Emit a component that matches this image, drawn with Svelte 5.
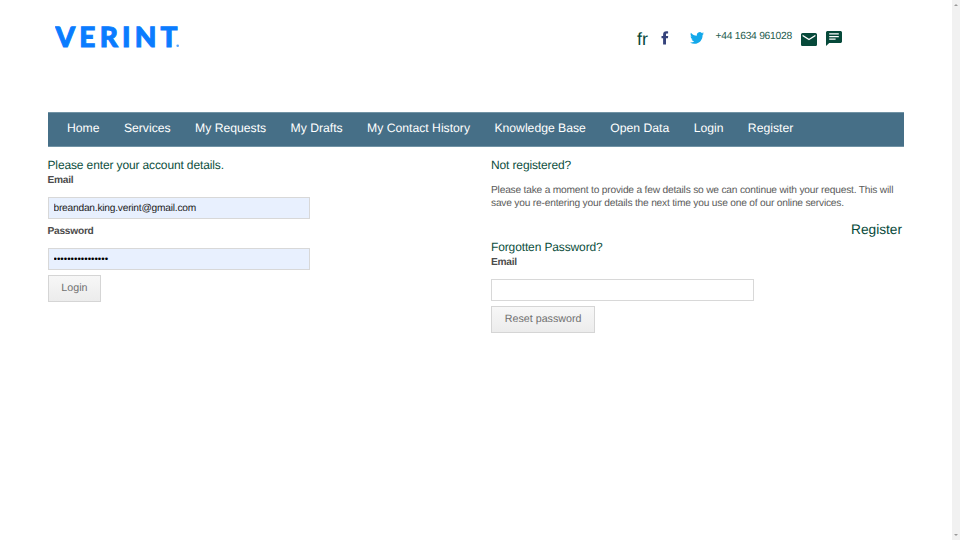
<script>
  const links = ['Home', 'Services', 'My Requests', 'My Drafts', 'My Contact History', 'Knowledge Base', 'Open Data', 'Login', 'Register'];
  let email = $state('breandan.king.verint@gmail.com');
  let password = $state('passwordpassword');
  let resetEmail = $state('');
</script>

<div class="page">
  <div class="content">
    <header>
      <svg class="logo" width="132" height="40" viewBox="0 -6 132 40" role="img" aria-label="Verint">
        <text x="0.5" y="23.7" textLength="122" lengthAdjust="spacing">VERINT</text>
        <circle cx="122.7" cy="22.8" r="1.3" />
      </svg>
      <div class="tools">
        <a class="lang" href="#fr">fr</a>
        <a class="fb" href="#facebook" aria-label="Facebook">
          <svg width="8" height="14" viewBox="0 0 8 14"><path fill="#35437c" d="M2.100 13.400V7.300H.5V4.900h1.600V3.400C2.100 1.200 3.400.3 5.300.3c.9 0 1.600.1 1.800.1v2.200H6C5.200 2.600 5 3 5 3.700v1.200h2.200l-.3 2.400H5v6.100z" /></svg>
        </a>
        <a class="tw" href="#twitter" aria-label="Twitter">
          <svg width="14" height="12" viewBox="0 2 24 20" preserveAspectRatio="none"><path fill="#13a8ea" d="M23.950 4.570a10 10 0 0 1-2.820.770 4.960 4.960 0 0 0 2.160-2.720c-.950.550-2 .950-3.130 1.180a4.920 4.920 0 0 0-8.380 4.480C7.690 8.100 4.070 6.130 1.640 3.160a4.820 4.820 0 0 0-.660 2.480c0 1.710.870 3.210 2.190 4.100a4.900 4.900 0 0 1-2.230-.620v.060a4.920 4.920 0 0 0 3.950 4.830 5 5 0 0 1-2.210.080 4.940 4.940 0 0 0 4.600 3.420A9.870 9.870 0 0 1 0 19.540a13.990 13.990 0 0 0 7.550 2.210c9.050 0 14-7.500 14-13.980 0-.210 0-.420-.020-.630a9.940 9.940 0 0 0 2.460-2.550z" /></svg>
        </a>
        <span class="phone">+44 1634 961028</span>
        <a class="mail" href="#mail" aria-label="Email us">
          <svg width="16" height="13" viewBox="2 4 20 16" preserveAspectRatio="none"><path fill="#06493a" d="M20 4H4c-1.100 0-2 .9-2 2v12c0 1.100.9 2 2 2h16c1.100 0 2-.9 2-2V6c0-1.100-.9-2-2-2zm0 4-8 5-8-5V6l8 5 8-5z" /></svg>
        </a>
        <a class="chat" href="#chat" aria-label="Chat">
          <svg width="16" height="15" viewBox="2 2 20 20" preserveAspectRatio="none"><path fill="#06493a" d="M20 2H4c-1.100 0-2 .9-2 2v18l4-4h14c1.100 0 2-.9 2-2V4c0-1.100-.9-2-2-2zM6 8.500h12v1.800H6zm8 5.300H6V12h8zm4-7H6V5h12z" /></svg>
        </a>
      </div>
    </header>
    <nav>
      {#each links as link}<a href="#{link}">{link}</a>{/each}
    </nav>
    <main>
      <form class="login">
        <h2>Please enter your account details.</h2>
        <label for="email">Email</label>
        <input id="email" class="filled" type="text" bind:value={email} />
        <label for="password">Password</label>
        <input id="password" class="filled secret" type="password" bind:value={password} />
        <button type="button">Login</button>
      </form>
      <section>
        <h2>Not registered?</h2>
        <p>Please take a moment to provide a few details so we can continue with your request. This will<br />save you re-entering your details the next time you use one of our online services.</p>
        <a class="register" href="#register">Register</a>
        <h2>Forgotten Password?</h2>
        <label for="reset">Email</label>
        <input id="reset" type="text" bind:value={resetEmail} />
        <button type="button">Reset password</button>
      </section>
    </main>
  </div>
  <div class="scrollbar"><i class="up"></i><i class="down"></i></div>
</div>

<style>
  .page {
    display: flex;
    justify-content: space-between;
    height: 540px;
    overflow: hidden;
    background: #fff;
    font-family: 'Liberation Sans', Arial, sans-serif;
    text-rendering: geometricPrecision;
    color: #5b5b5b;
  }
  .content { width: 856.500px; margin-left: 47.500px; }
  a { text-decoration: none; color: #06493a; }
  header { display: flex; height: 112.400px; box-sizing: border-box; padding: 23px 0 0 7px; }
  .logo { display: block; flex: none; margin-top: -6px; }
  .logo text { font: 900 28px Lato, sans-serif; fill: #0a7cff; stroke: #0a7cff; stroke-width: 1; }
  .logo circle { fill: #55a4ff; }
  .tools { display: flex; align-items: flex-start; margin-left: 450.500px; }
  .tools svg { display: block; }
  .lang { width: 24px; font-size: 17.800px; line-height: 20px; padding-top: 6px; }
  .fb { width: 28.500px; padding-top: 8px; }
  .tw { width: 26px; padding-top: 9px; }
  .phone { width: 85px; white-space: nowrap; font-size: 10.300px; letter-spacing: -.27px; line-height: 12px; padding-top: 8px; color: #245c4e; }
  .mail { width: 25px; padding-top: 10px; }
  .chat { padding-top: 8px; }
  nav {
    display: flex;
    gap: 24.400px;
    height: 34.600px;
    box-sizing: border-box;
    padding-left: 19.500px;
    background: #466f87;
    border: 1px solid #7193a5;
    border-width: 1px 0;
    line-height: 31px;
    font-size: 12.200px;
    white-space: nowrap;
  }
  nav a { color: #fff; }
  main { display: flex; padding-top: 11px; }
  form, section { display: flex; flex-direction: column; align-items: flex-start; }
  .login { width: 443.500px; }
  section { width: 413px; }
  h2 { margin: 0; font-weight: 400; font-size: 12px; letter-spacing: -.13px; line-height: 15px; color: #0d4f40; }
  label { font-size: 10.200px; letter-spacing: -.26px; line-height: 15px; height: 24px; font-weight: 700; color: #4c4c4c; }
  input {
    width: 262.500px;
    height: 22.500px;
    box-sizing: border-box;
    margin: 0 0 4.500px;
    padding: 0 5px;
    border: 1px solid #d8d8d8;
    border-radius: 0;
    outline: none;
    background: #fff;
    font: 10.200px 'Liberation Sans', Arial, sans-serif;
    letter-spacing: -.22px;
    text-rendering: geometricPrecision;
    color: #222;
  }
  input.filled { background: #e8f0fe; }
  input.secret { font-size: 9.750px; letter-spacing: 0; color: #000; }
  button {
    height: 27px;
    box-sizing: border-box;
    padding: 0 12.800px 1px;
    border: 1px solid #d5d5d5;
    border-radius: 0;
    background: linear-gradient(#f7f7f7, #ececec);
    font: 10.700px 'Liberation Sans', Arial, sans-serif;
    text-rendering: geometricPrecision;
    color: #707070;
  }
  p { margin: 11px 0 0; font-size: 10.200px; letter-spacing: -.197px; line-height: 13.500px; white-space: nowrap; }
  .register { align-self: flex-end; margin: 9px 2px 1px 0; font-size: 13.700px; line-height: 19px; }
  .scrollbar { width: 8.500px; display: flex; flex-direction: column; justify-content: space-between; align-items: center; background: #f1f1f1; padding: 4px 0; box-sizing: border-box; }
  .scrollbar i { border: 2px solid transparent; }
  .scrollbar .up { border-top: 0; border-bottom-color: #999; }
  .scrollbar .down { border-bottom: 0; border-top-color: #999; }
</style>
